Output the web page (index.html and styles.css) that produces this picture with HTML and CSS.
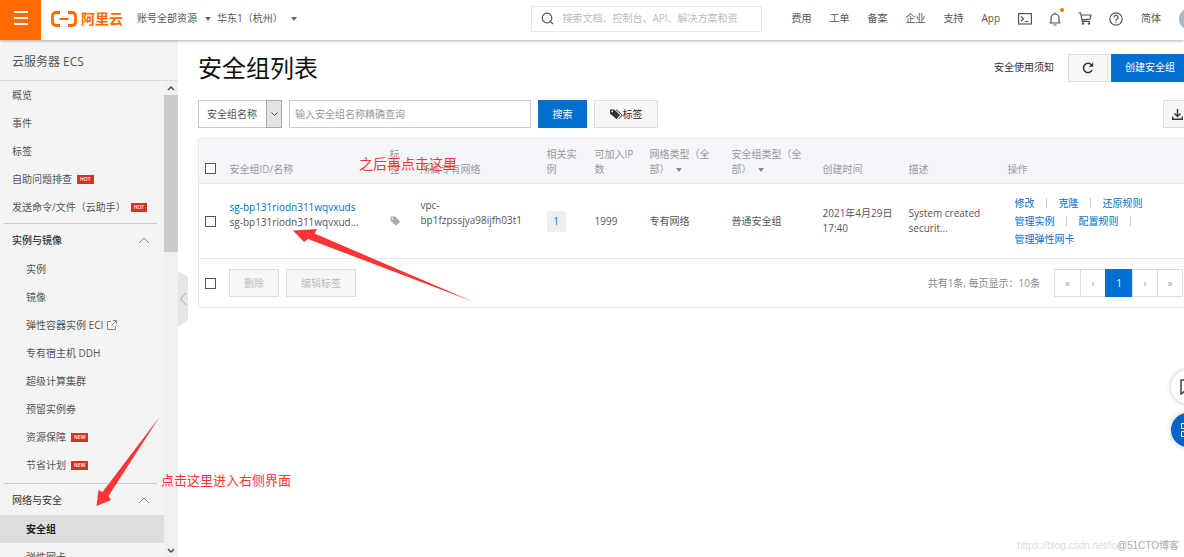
FILE: index.html
```html
<!DOCTYPE html>
<html lang="zh-CN">
<head>
<meta charset="utf-8">
<title>安全组列表</title>
<link rel="stylesheet" href="styles.css">
</head>
<body>
<header class="topbar">
  <button class="menu-btn" aria-label="菜单"><svg width="14" height="16" viewBox="0 0 14 16"><path d="M0 2h14M0 8h14M0 14h14" stroke="#fff" stroke-width="2"/></svg></button>
  <a class="logo" href="#">
    <svg width="26" height="16" viewBox="0 0 26 16"><path d="M9 1.500H5.500Q1.500 1.500 1.500 5v6Q1.500 14.500 5.500 14.500H9M17 1.500h3.500Q24.500 1.500 24.500 5v6Q24.500 14.500 20.500 14.500H17" fill="none" stroke="#ff6a00" stroke-width="2.800"/><path d="M8.500 8h9" stroke="#ff6a00" stroke-width="2"/></svg>
    <span>阿里云</span>
  </a>
  <button class="picker">账号全部资源<i class="caret"></i></button>
  <button class="picker region">华东1（杭州）<i class="caret"></i></button>
  <label class="search">
    <svg width="13" height="13" viewBox="0 0 13 13" fill="none" stroke="#555" stroke-width="1.200"><circle cx="6" cy="6" r="4.800"/><path d="M9.300 9.300L12 12"/></svg>
    <input type="text" aria-label="搜索" placeholder="搜索文档、控制台、API、解决方案和资">
  </label>
  <nav class="topnav">
    <a href="#">费用</a><a href="#">工单</a><a href="#">备案</a><a href="#">企业</a><a href="#">支持</a><a href="#">App</a>
    <div class="icons">
      <a href="#" aria-label="终端"><svg width="14" height="12" viewBox="0 0 14 12" fill="none" stroke="#555" stroke-width="1.200"><rect x=".6" y=".6" width="12.800" height="10.400"/><path d="M3 3.500l2.500 2.300L3 8.200M6.800 8.500h3.600"/></svg></a>
      <a href="#" class="bell" aria-label="通知"><svg width="12" height="14" viewBox="0 0 12 14" fill="none" stroke="#555" stroke-width="1.200"><path d="M.5 11h11M2 11V6a4 4 0 0 1 8 0v5M6 .5V2M4.500 13h3"/></svg></a>
      <a href="#" aria-label="购物车"><svg width="14" height="13" viewBox="0 0 14 13" fill="none" stroke="#555" stroke-width="1.200"><path d="M.2 1h2.400l1.700 8.300h7.400M3 3h10l-1 4.200-8 .6"/><circle cx="5" cy="11.500" r=".7"/><circle cx="11" cy="11.500" r=".7"/></svg></a>
      <a href="#" aria-label="帮助"><svg width="14" height="14" viewBox="0 0 14 14" fill="none" stroke="#555" stroke-width="1.200"><circle cx="7" cy="7" r="6.200"/><path d="M4.900 5.600a2.100 2.100 0 1 1 3 1.800Q7 7.800 7 8.700M7 9.700v1.300"/></svg></a>
    </div>
    <a href="#">简体</a>
    <a href="#" class="avatar" aria-label="账号"></a>
  </nav>
</header>

<div class="body">
  <aside class="sidebar">
    <h2 class="product">云服务器 ECS</h2>
    <div class="side-scroll">
      <nav class="menu">
        <a href="#">概览</a>
        <a href="#">事件</a>
        <a href="#">标签</a>
        <a href="#">自助问题排查<b class="flag">HOT</b></a>
        <a href="#">发送命令/文件（云助手）<b class="flag">HOT</b></a>
        <section class="group first">
          <button class="group-head strong">实例与镜像<svg width="12" height="7" viewBox="0 0 12 7"><path d="M1 6l5-5 5 5" fill="none" stroke="#888"/></svg></button>
          <a href="#">实例</a>
          <a href="#">镜像</a>
          <a href="#">弹性容器实例 ECI<svg class="ext" width="10" height="10" viewBox="0 0 10 10" fill="none" stroke="#888"><path d="M4 1.500H.5v8h8V6M6 .5h3.500V4M9.500.500L4.500 5.500"/></svg></a>
          <a href="#">专有宿主机 DDH</a>
          <a href="#">超级计算集群</a>
          <a href="#">预留实例券</a>
          <a href="#">资源保障<b class="flag">NEW</b></a>
          <a href="#">节省计划<b class="flag">NEW</b></a>
        </section>
        <section class="group">
          <button class="group-head">网络与安全<svg width="12" height="7" viewBox="0 0 12 7"><path d="M1 6l5-5 5 5" fill="none" stroke="#888"/></svg></button>
          <a href="#" class="active">安全组</a>
          <a href="#">弹性网卡</a>
        </section>
      </nav>
      <div class="scrollbar">
        <svg width="8" height="14" viewBox="0 0 8 14"><path d="M1 9l3-3 3 3" fill="none" stroke="#444" stroke-width="1.400"/></svg>
        <div class="track"><div class="thumb"></div></div>
        <svg width="8" height="14" viewBox="0 0 8 14"><path d="M1 6l3 3 3-3" fill="none" stroke="#444" stroke-width="1.400"/></svg>
      </div>
    </div>
    <button class="collapse" aria-label="收起"><svg width="10" height="56" viewBox="0 0 10 56"><path d="M0 0l10 6v43L0 56z" fill="#e6e6e6"/><path d="M8 22L2.500 28 8 34" fill="none" stroke="#aaa"/></svg></button>
  </aside>

  <main class="content">
    <div class="title-row">
      <h1>安全组列表</h1>
      <a href="#" class="notice">安全使用须知</a>
      <button class="btn refresh" aria-label="刷新"><svg width="12" height="12" viewBox="0 0 12 12"><path d="M10.200 8A4.600 4.600 0 1 1 9.600 3" fill="none" stroke="#333" stroke-width="1.500"/><path d="M11.200.500v4.300H6.900z" fill="#333"/></svg></button>
      <button class="btn primary create">创建安全组</button>
    </div>
    <div class="filter-row">
      <div class="select">
        <select aria-label="筛选项"><option>安全组名称</option></select>
        <span class="arrow"><svg width="7" height="5" viewBox="0 0 7 5"><path d="M.5.500l3 3 3-3" fill="none" stroke="#555"/></svg></span>
      </div>
      <input class="query" type="text" aria-label="安全组名称" placeholder="输入安全组名称精确查询">
      <button class="btn primary">搜索</button>
      <button class="btn tags"><svg width="13" height="10" viewBox="0 0 13 10"><path d="M0 .5h4.200L10 6l-3.600 4L0 4.500z" fill="#333"/><path d="M6 .5L12.200 6 8.800 9.800" fill="none" stroke="#333"/><circle cx="2.200" cy="2.400" r=".9" fill="#f7f7f7"/></svg>标签</button>
      <button class="btn export" aria-label="导出"><svg width="11" height="11" viewBox="0 0 11 11" fill="none" stroke="#333" stroke-width="1.400"><path d="M5.500 0v7M2.500 4.500l3 3 3-3M.7 7.500v2.800h9.600V7.500"/></svg></button>
    </div>

    <table class="grid">
      <colgroup><col class="c-check"><col class="c-id"><col class="c-tag"><col class="c-vpc"><col class="c-inst"><col class="c-ip"><col class="c-net"><col class="c-type"><col class="c-time"><col class="c-desc"><col></colgroup>
      <thead>
        <tr>
          <th class="check"><input type="checkbox" aria-label="全选"></th>
          <th>安全组ID/名称</th><th>标签</th><th>所属专有网络</th><th>相关实例</th><th>可加入IP数</th>
          <th>网络类型（全部）<i class="caret"></i></th><th>安全组类型（全部）<i class="caret"></i></th>
          <th>创建时间</th><th>描述</th><th>操作</th>
        </tr>
      </thead>
      <tbody>
        <tr>
          <td class="check"><input type="checkbox" aria-label="选择 sg-bp131riodn311wqvxuds"></td>
          <td class="ids"><a href="#">sg-bp131riodn311wqvxuds</a><br>sg-bp131riodn311wqvxud...</td>
          <td><svg class="tag" width="10" height="10" viewBox="0 0 10 10"><path d="M.5.500h4.700L10 5.400 6.200 9.800.500 4.600z" fill="#aaa"/><circle cx="2.500" cy="2.600" r=".9" fill="#fff"/></svg></td>
          <td class="vpc">vpc-<br>bp1fzpssjya98ijfh03t1</td>
          <td><a href="#" class="count">1</a></td>
          <td>1999</td><td>专有网络</td><td>普通安全组</td>
          <td class="nowrap">2021年4月29日<br>17:40</td>
          <td class="nowrap">System created<br>securit...</td>
          <td class="ops">
            <div><a href="#">修改</a><i></i><a href="#">克隆</a><i></i><a href="#">还原规则</a></div>
            <div><a href="#">管理实例</a><i></i><a href="#">配置规则</a><i></i></div>
            <div><a href="#">管理弹性网卡</a></div>
          </td>
        </tr>
      </tbody>
    </table>
    <div class="table-foot">
      <input type="checkbox" aria-label="全选本页">
      <button class="btn off" disabled>删除</button>
      <button class="btn off" disabled>编辑标签</button>
      <span class="total">共有1条, 每页显示：10条</span>
      <nav class="pager"><a href="#">«</a><a href="#">‹</a><a href="#" class="current">1</a><a href="#">›</a><a href="#">»</a></nav>
    </div>
  </main>
</div>

<div class="floaters">
  <button class="bubble" aria-label="反馈"><svg width="16" height="16" viewBox="0 0 16 16" fill="none" stroke="#444" stroke-width="1.500"><path d="M1 1h14v11H5l-4 3zM4 6.500h8"/></svg></button>
  <button class="bubble blue" aria-label="应用"><svg width="16" height="16" viewBox="0 0 16 16" fill="none" stroke="#fff"><path d="M1.500 1.500h5v5h-5zM9.500 1.500h5v5h-5zM1.500 9.500h5v5h-5zM9.500 9.500h5v5h-5z"/></svg></button>
</div>

<svg class="marks" width="480" height="510" viewBox="0 0 480 510" fill="#fb3535">
  <path d="M293 230.500L317 229 314.500 233.500 474 302 308 239 304 242z"/>
  <path d="M159.500 417L108.500 496 111 500 96.500 506 98.500 490 102.500 492z"/>
</svg>
<span class="note note-row">之后再点击这里</span>
<span class="note note-side">点击这里进入右侧界面</span>
<span class="mark mark-url">https://blog.csdn.net/lo</span>
<span class="mark mark-site">@51CTO博客</span>
</body>
</html>
```
FILE: styles.css
```css
* { box-sizing: border-box; }
body {
  margin: 0;
  height: 100vh;
  overflow: hidden;
  position: relative;
  display: flex;
  flex-direction: column;
  font: 10px/15px "Open Sans", "Noto Sans CJK SC", sans-serif;
  color: #555;
  background: #fff;
}
a { color: inherit; text-decoration: none; }
button, input, select { font: inherit; color: inherit; margin: 0; padding: 0; border: 0; background: none; }
svg { display: block; flex: none; }
h1, h2 { margin: 0; font-weight: 400; }
::placeholder { color: #999; opacity: 1; }
input[type="checkbox"] {
  appearance: none;
  display: block;
  flex: none;
  width: 11px;
  height: 11px;
  border: 1px solid #555;
  background: #fff;
}
.caret {
  display: inline-block;
  border: 3px solid transparent;
  border-top: 4px solid #666;
  border-bottom: 0;
}

.topbar {
  flex: none;
  display: flex;
  align-items: center;
  height: 40px;
  padding-bottom: 3px;
  box-shadow: 0 1px 3px rgba(0, 0, 0, .3);
  position: relative;
  z-index: 2;
  background: #fff;
}
.menu-btn {
  width: 41px;
  height: 40px;
  margin-bottom: -3px;
  padding-bottom: 4px;
  display: flex;
  align-items: center;
  justify-content: center;
  background: #ff6a00;
}
.logo {
  display: flex;
  align-items: center;
  gap: 4px;
  margin-left: 10px;
  color: #ff6a00;
  font-size: 14px;
  font-weight: 700;
  white-space: nowrap;
}
.picker { display: flex; align-items: center; gap: 8px; margin-left: 14px; white-space: nowrap; }
.picker.region { margin-left: 6px; }
.search {
  display: flex;
  align-items: center;
  gap: 8px;
  width: 231px;
  height: 26px;
  padding: 0 9px;
  margin-left: auto;
  border: 1px solid #e8e8e8;
}
.search input { flex: 1; min-width: 0; }
.search ::placeholder { color: #bbb; }
.topnav { display: flex; align-items: center; gap: 18px; margin-left: 29px; margin-right: -17px; white-space: nowrap; }
.icons { display: flex; align-items: center; gap: 17px; }
.bell { position: relative; }
.bell::after {
  content: "";
  position: absolute;
  right: -3px;
  top: -4px;
  width: 4px;
  height: 4px;
  border-radius: 50%;
  background: #ff6a00;
}
.avatar { width: 22px; height: 22px; border-radius: 50%; background: #a5b9c8; }

.body { flex: 1; min-height: 0; display: flex; }
.sidebar {
  position: relative;
  flex: none;
  width: 178px;
  display: flex;
  flex-direction: column;
  background: #f4f4f4;
}
.product {
  flex: none;
  height: 41px;
  padding: 2px 12px 0;
  font-size: 12px;
  line-height: 39px;
  border-bottom: 1px solid #ddd;
}
.side-scroll { flex: 1; min-height: 0; display: flex; }
.menu { flex: 1; overflow: hidden; }
.menu a { display: flex; align-items: center; height: 28px; padding-left: 12px; white-space: nowrap; }
.menu .group a { padding-left: 26px; }
.menu .group a.active { background: #ddd; color: #222; font-weight: 700; }
.flag {
  margin-left: 5px;
  padding: 0 3px;
  background: #d93026;
  color: #fff;
  font-size: 5px;
  font-weight: 600;
  line-height: 9px;
}
.ext { margin-left: 4px; }
.group { padding-top: 4px; }
.group.first { padding-top: 2px; }
.group::before { content: ""; display: block; height: 1px; margin: 0 7px 0 4px; background: #ccc; }
.group-head {
  display: flex;
  align-items: center;
  justify-content: space-between;
  width: 100%;
  height: 31px;
  padding: 2px 14px 0 12px;
  color: #333;
}
.group-head.strong { font-weight: 500; }
.scrollbar { flex: none; width: 14px; display: flex; flex-direction: column; align-items: center; background: #f0f0f0; }
.track { flex: 1; width: 100%; }
.thumb { height: 35%; background: #cbcbcb; }
.collapse { position: absolute; left: 100%; top: 231px; }

.content { flex: 1; min-width: 0; padding: 13px 0 0 20px; }
.title-row { display: flex; align-items: center; height: 29px; }
.title-row h1 { flex: 1; font-size: 24px; line-height: 32px; color: #111; }
.notice { color: #333; }
.btn {
  display: flex;
  align-items: center;
  justify-content: center;
  height: 28px;
  padding: 0 14px;
  border: 1px solid #ddd;
  background: #f7f7f7;
  color: #333;
  white-space: nowrap;
}
.btn.primary { background: #006fcf; border-color: #006fcf; color: #fff; }
.btn.refresh { width: 40px; margin-left: 14px; }
.btn.create { margin-left: 3px; padding: 0 8px 0 13px; }
.filter-row { display: flex; align-items: center; gap: 7px; margin-top: 18px; }
.select { position: relative; width: 84px; height: 28px; border: 1px solid #ccc; }
.select select { appearance: none; width: 100%; height: 100%; padding-left: 8px; }
.arrow {
  position: absolute;
  top: -1px;
  right: -1px;
  bottom: -1px;
  width: 16px;
  display: flex;
  align-items: center;
  justify-content: center;
  border: 1px solid #aaa;
  background: #e3e3e3;
  pointer-events: none;
}
.query { width: 242px; height: 28px; padding: 0 5px; border: 1px solid #ccc; }
.filter-row .primary { width: 49px; }
.btn.tags { width: 64px; }
.btn.export { margin-left: auto; width: 21px; padding: 0 0 0 7px; height: 28px; border-right: 0; }

.grid {
  width: 100%;
  margin-top: 10px;
  border-collapse: collapse;
  table-layout: fixed;
  border: 1px solid #e6e9ee;
  border-right: 0;
}
.c-check { width: 31px; }
.c-id { width: 160px; }
.c-tag { width: 31px; }
.c-vpc { width: 126px; }
.c-inst { width: 48px; }
.c-ip { width: 55px; }
.c-net { width: 82px; }
.c-type { width: 91px; }
.c-time { width: 86px; }
.c-desc { width: 99px; }
.grid th, .grid td { text-align: left; font-weight: 400; padding: 0 15px 0 0; }
.grid th { height: 44px; padding-top: 8px; padding-bottom: 6px; vertical-align: bottom; color: #999; background: #f4f6fa; }
.grid th .caret { margin: 0 0 1px 6px; border-top-color: #888; }
.grid td { height: 75px; border-top: 1px solid #e6e9ee; }
.grid .check { padding-left: 6px; vertical-align: middle; }
.grid th.check { padding-top: 14px; padding-bottom: 0; }
.grid .ids { padding-right: 0; padding-bottom: 13px; }
.ids a, .ops a { color: #0070cc; }
.grid .vpc { padding-right: 0; padding-bottom: 16px; }
.nowrap { white-space: nowrap; }
.count {
  display: inline-block;
  width: 19px;
  line-height: 21px;
  text-align: center;
  background: #eee;
  border-radius: 3px;
  color: #0070cc;
}
.grid .ops { padding: 0 0 0 7px; line-height: 18px; }
.ops div { display: flex; align-items: center; }
.ops i { width: 1px; height: 10px; margin: 0 12px 0 11px; background: #ccc; }
.table-foot {
  display: flex;
  align-items: center;
  gap: 7px;
  height: 49px;
  padding-left: 6px;
  border-left: 1px solid #e6e9ee;
  border-bottom: 1px solid #e6e9ee;
}
.table-foot input { margin-right: 6px; }
.btn.off { color: #bbb; }
.total { margin-left: auto; margin-right: 7px; color: #888; }
.pager { display: flex; height: 28px; border: 1px solid #ddd; margin-right: 1px; }
.pager a { width: 25px; line-height: 26px; text-align: center; color: #999; }
.pager a + a { border-left: 1px solid #ddd; }
.pager .current { width: 27px; margin: -1px 0; line-height: 28px; background: #006fcf; color: #fff; }
.pager a + .current { border-color: #006fcf; }

.floaters { position: absolute; right: -21px; top: 370px; display: grid; gap: 9px; }
.bubble {
  width: 34px;
  height: 34px;
  padding-left: 9px;
  border-radius: 50%;
  background: #fff;
  box-shadow: 0 0 5px rgba(0, 0, 0, .25);
}
.bubble.blue { background: #0064c8; }

.marks { position: absolute; left: 0; top: 0; z-index: 3; pointer-events: none; }
.note { position: absolute; z-index: 3; color: #fb3535; white-space: nowrap; }
.note-row { left: 359px; top: 154px; font-size: 14px; line-height: 20px; }
.note-side { left: 161px; top: 470px; font-size: 13px; line-height: 20px; }
.mark { position: absolute; bottom: 4px; font-family: "Liberation Sans", "Noto Sans CJK SC", sans-serif; white-space: nowrap; }
.mark-url { left: 1017px; color: #ddd; }
.mark-site { right: 5px; color: #aaa; }
```
